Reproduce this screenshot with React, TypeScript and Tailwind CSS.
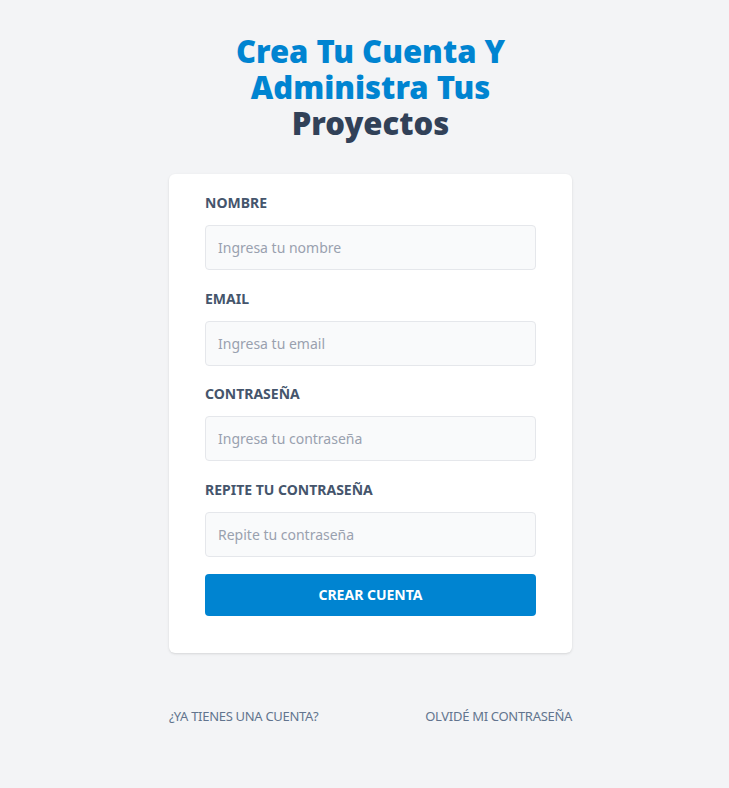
import React from "react";

const fields = [
  { id: "nombre", label: "Nombre", type: "text", placeholder: "Ingresa tu nombre" },
  { id: "email", label: "Email", type: "email", placeholder: "Ingresa tu email" },
  { id: "password", label: "Contraseña", type: "password", placeholder: "Ingresa tu contraseña" },
  { id: "password2", label: "Repite tu contraseña", type: "password", placeholder: "Repite tu contraseña" },
];

const App = () => {
  return (
    <main
      className="min-h-screen bg-gray-100 pt-[33px]"
      style={{ fontFamily: '"Noto Sans", "Open Sans", sans-serif' }}
    >
      <div className="mx-auto w-[415px] pl-3">
        <h1 className="text-center text-[31px] leading-[36px] font-black text-sky-600 px-10">
          Crea Tu Cuenta Y Administra Tus{" "}
          <span className="text-slate-700">Proyectos</span>
        </h1>

        <form className="mt-[33px] bg-white rounded-md shadow px-9 pt-[19px] pb-[37px]">
          {fields.map((f, i) => (
            <div key={f.id} className={i === 0 ? "" : "mt-[18.5px]"}>
              <label
                htmlFor={f.id}
                className="block uppercase text-slate-600 text-sm leading-5 font-bold"
              >
                {f.label}
              </label>
              <input
                id={f.id}
                type={f.type}
                placeholder={f.placeholder}
                className="mt-3 w-full h-[45px] px-3 border border-gray-200 rounded bg-gray-50 text-sm placeholder-gray-400 outline-none"
              />
            </div>
          ))}

          <button
            type="submit"
            className="mt-[17.5px] w-full h-[42px] rounded bg-sky-600 text-white text-sm font-bold uppercase"
          >
            Crear Cuenta
          </button>
        </form>

        <nav className="mt-[54px] flex justify-between">
          <a href="#" className="uppercase text-[13px] tracking-[-0.3px] text-slate-500">
            ¿Ya tienes una cuenta?
          </a>
          <a href="#" className="uppercase text-[13px] tracking-[-0.3px] text-slate-500">
            Olvidé mi contraseña
          </a>
        </nav>
      </div>
    </main>
  );
};

export default App;
